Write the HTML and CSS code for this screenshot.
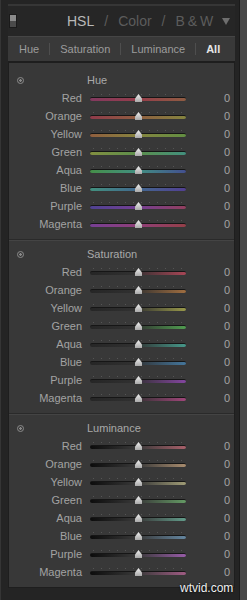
FILE: index.html
```html
<!DOCTYPE html>
<html lang="en">
<head>
    <meta charset="UTF-8">
    <title>HSL / Color / B&amp;W</title>
    <link rel="stylesheet" href="styles.css">
</head>
<body>
    <div class="window">
        <div class="frame">
            <div class="header">
                <span class="switch"></span>
                <div class="title"><span class="on">HSL</span><span class="slash">/</span><span>Color</span><span class="slash">/</span><span class="bw">B &amp; W</span></div>
                <span class="menu"></span>
            </div>
            <nav class="tabs">
                <span>Hue</span><i></i><span>Saturation</span><i></i><span>Luminance</span><i></i><span class="active">All</span>
            </nav>
            <div class="panel">
                <section class="group hue">
                    <div class="group-title"><span class="target"></span><span>Hue</span></div>
                    <div class="row red"><label>Red</label><div class="slider"><div class="track"></div><div class="thumb"></div></div><span class="val">0</span></div>
                    <div class="row orange"><label>Orange</label><div class="slider"><div class="track"></div><div class="thumb"></div></div><span class="val">0</span></div>
                    <div class="row yellow"><label>Yellow</label><div class="slider"><div class="track"></div><div class="thumb"></div></div><span class="val">0</span></div>
                    <div class="row green"><label>Green</label><div class="slider"><div class="track"></div><div class="thumb"></div></div><span class="val">0</span></div>
                    <div class="row aqua"><label>Aqua</label><div class="slider"><div class="track"></div><div class="thumb"></div></div><span class="val">0</span></div>
                    <div class="row blue"><label>Blue</label><div class="slider"><div class="track"></div><div class="thumb"></div></div><span class="val">0</span></div>
                    <div class="row purple"><label>Purple</label><div class="slider"><div class="track"></div><div class="thumb"></div></div><span class="val">0</span></div>
                    <div class="row magenta"><label>Magenta</label><div class="slider"><div class="track"></div><div class="thumb"></div></div><span class="val">0</span></div>
                </section>
                <section class="group sat">
                    <div class="group-title"><span class="target"></span><span>Saturation</span></div>
                    <div class="row red"><label>Red</label><div class="slider"><div class="track"></div><div class="thumb"></div></div><span class="val">0</span></div>
                    <div class="row orange"><label>Orange</label><div class="slider"><div class="track"></div><div class="thumb"></div></div><span class="val">0</span></div>
                    <div class="row yellow"><label>Yellow</label><div class="slider"><div class="track"></div><div class="thumb"></div></div><span class="val">0</span></div>
                    <div class="row green"><label>Green</label><div class="slider"><div class="track"></div><div class="thumb"></div></div><span class="val">0</span></div>
                    <div class="row aqua"><label>Aqua</label><div class="slider"><div class="track"></div><div class="thumb"></div></div><span class="val">0</span></div>
                    <div class="row blue"><label>Blue</label><div class="slider"><div class="track"></div><div class="thumb"></div></div><span class="val">0</span></div>
                    <div class="row purple"><label>Purple</label><div class="slider"><div class="track"></div><div class="thumb"></div></div><span class="val">0</span></div>
                    <div class="row magenta"><label>Magenta</label><div class="slider"><div class="track"></div><div class="thumb"></div></div><span class="val">0</span></div>
                </section>
                <section class="group lum">
                    <div class="group-title"><span class="target"></span><span>Luminance</span></div>
                    <div class="row red"><label>Red</label><div class="slider"><div class="track"></div><div class="thumb"></div></div><span class="val">0</span></div>
                    <div class="row orange"><label>Orange</label><div class="slider"><div class="track"></div><div class="thumb"></div></div><span class="val">0</span></div>
                    <div class="row yellow"><label>Yellow</label><div class="slider"><div class="track"></div><div class="thumb"></div></div><span class="val">0</span></div>
                    <div class="row green"><label>Green</label><div class="slider"><div class="track"></div><div class="thumb"></div></div><span class="val">0</span></div>
                    <div class="row aqua"><label>Aqua</label><div class="slider"><div class="track"></div><div class="thumb"></div></div><span class="val">0</span></div>
                    <div class="row blue"><label>Blue</label><div class="slider"><div class="track"></div><div class="thumb"></div></div><span class="val">0</span></div>
                    <div class="row purple"><label>Purple</label><div class="slider"><div class="track"></div><div class="thumb"></div></div><span class="val">0</span></div>
                    <div class="row magenta"><label>Magenta</label><div class="slider"><div class="track"></div><div class="thumb"></div></div><span class="val">0</span></div>
                </section>
            </div>
        </div>
        <div class="scroll"></div>
        <div class="watermark">wtvid.com</div>
    </div>
</body>
</html>
```

FILE: styles.css
```css
body {
    margin: 0;
    background-color: #242424;
    font-family: 'Liberation Sans', Arial, sans-serif;
}

.window {
    position: relative;
    display: flex;
    height: 600px;
    padding-left: 7px;
    border-left: 1px solid #353535;
    box-sizing: border-box;
}

.frame {
    width: 228px;
    padding-top: 4px;
}

/* header with the HSL / Color / B&W switch */
.header {
    display: flex;
    align-items: center;
    height: 32px;
    border-top: 2px solid #363636;
    background-color: #262626;
    box-sizing: border-box;
}

.switch {
    flex-shrink: 0;
    width: 6px;
    height: 12px;
    margin-left: 1px;
    border: 1px solid #1a1a1a;
    background: linear-gradient(#8a8a8a 0, #8a8a8a 50%, #4a4a4a 50%, #4a4a4a 100%);
}

.title {
    display: flex;
    gap: 10px;
    margin-left: 50px;
    font-size: 14px;
    white-space: nowrap;
    color: #5c5c5c;
}

.title .on {
    color: #b9b9b9;
}

.title .bw {
    word-spacing: -1px;
}

.menu {
    flex-shrink: 0;
    width: 0;
    height: 0;
    margin-left: auto;
    margin-right: 5px;
    border-left: 4px solid transparent;
    border-right: 4px solid transparent;
    border-top: 7px solid #6e6e6e;
}

/* tab bar */
.tabs {
    display: flex;
    align-items: center;
    gap: 10px;
    height: 27px;
    padding-left: 11px;
    background-color: #393939;
    border-top: 1px solid #454545;
    border-bottom: 2px solid #1e1e1e;
    box-sizing: border-box;
    font-size: 11px;
    color: #9c9c9c;
}

.tabs i {
    width: 1px;
    height: 12px;
    background-color: #4e4e4e;
}

.tabs .active {
    color: #e6e6e6;
    font-weight: bold;
}

/* sliders */
.panel {
    padding-top: 1px;
    background-color: #383838;
    border-left: 1px solid #1e1e1e;
    border-right: 1px solid #1e1e1e;
    border-bottom: 1px solid #1e1e1e;
}

.group {
    padding: 7px 0 6px;
    border-bottom: 1px solid #2a2a2a;
    box-shadow: 0 1px 0 #444;
}

.group + .group {
    padding-top: 5px;
}

.group:last-child {
    border-bottom: none;
    box-shadow: none;
}

.group-title {
    display: flex;
    align-items: center;
    height: 18px;
    font-size: 11px;
    color: #a9a9a9;
}

.target {
    width: 5px;
    height: 5px;
    margin: 0 63px 0 8px;
    border: 1px solid #8a8a8a;
    border-radius: 50%;
    background: radial-gradient(circle, #8a8a8a 0, #8a8a8a 1px, transparent 1.5px);
}

.row {
    display: grid;
    grid-template-columns: 73px 96px 36px;
    column-gap: 8px;
    align-items: center;
    height: 18px;
    font-size: 11px;
    color: #a3a3a3;
}

.row label {
    text-align: right;
}

.val {
    text-align: right;
}

.slider {
    position: relative;
    height: 10px;
}

.slider::before {
    content: '';
    position: absolute;
    left: 3px;
    right: 3px;
    top: 1px;
    height: 1px;
    background: repeating-linear-gradient(90deg, #555 0, #555 1px, transparent 1px, transparent 8px);
}

.track {
    position: absolute;
    left: 0;
    right: 0;
    top: 4px;
    height: 3px;
    border-top: 1px solid #161616;
    border-radius: 2px;
}

.thumb {
    position: absolute;
    left: 45px;
    top: 1px;
    width: 7px;
    height: 8px;
    background: linear-gradient(#f0f0f0, #a8a8a8);
    clip-path: polygon(50% 0, 100% 55%, 100% 100%, 0 100%, 0 55%);
}

/* hue tracks */
.hue .red .track { background: linear-gradient(90deg, #82395f, #953d4a, #8e5c42); }
.hue .orange .track { background: linear-gradient(90deg, #8f3a4a, #8f5e40, #84843f); }
.hue .yellow .track { background: linear-gradient(90deg, #905e3e, #86843f, #628f42); }
.hue .green .track { background: linear-gradient(90deg, #828f40, #5c8f4c, #42907e); }
.hue .aqua .track { background: linear-gradient(90deg, #458f48, #428f82, #434f8f); }
.hue .blue .track { background: linear-gradient(90deg, #42907e, #42688f, #523f92); }
.hue .purple .track { background: linear-gradient(90deg, #4f4292, #743f92, #923f5e); }
.hue .magenta .track { background: linear-gradient(90deg, #773f94, #8f3f78, #943f48); }

/* saturation and luminance tracks */
.red { --c: #a84656; }
.orange { --c: #a06e40; }
.yellow { --c: #98984a; }
.green { --c: #509c50; }
.aqua { --c: #46988a; }
.blue { --c: #44769c; }
.purple { --c: #8446a0; }
.magenta { --c: #a0467a; }

.sat .track { background: linear-gradient(90deg, #262626, #303030 45%, var(--c)); }
.lum .track { background: linear-gradient(90deg, #0c0c0c, #3a3a3a 50%, var(--c)); }

.lum .red { --c: #a8606a; }
.lum .orange { --c: #a88c6e; }
.lum .yellow { --c: #a09c76; }
.lum .green { --c: #649a64; }
.lum .aqua { --c: #629c8a; }
.lum .blue { --c: #6486a0; }
.lum .purple { --c: #985ca8; }
.lum .magenta { --c: #a05c84; }

.scroll {
    width: 7px;
    margin-left: 4px;
    background-color: #484848;
    border-left: 1px solid #1a1a1a;
}

.watermark {
    position: absolute;
    left: 179px;
    top: 581px;
    font-size: 12px;
    color: #f0f0f0;
    text-shadow: 0 0 2px #000;
}
```
